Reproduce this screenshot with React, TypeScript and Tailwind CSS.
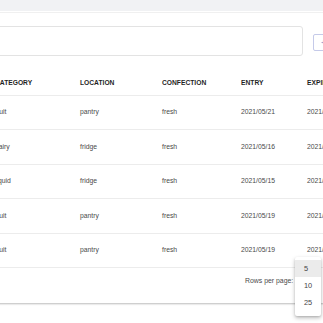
import React from "react";

const rows = [
  ["fruit", "pantry", "fresh", "2021/05/21", "2021/05/28"],
  ["dairy", "fridge", "fresh", "2021/05/16", "2021/05/23"],
  ["liquid", "fridge", "fresh", "2021/05/15", "2021/05/22"],
  ["fruit", "pantry", "fresh", "2021/05/19", "2021/05/26"],
  ["fruit", "pantry", "fresh", "2021/05/19", "2021/05/26"],
];

const heights = ["h-[34px]", "h-[35px]", "h-[34px]", "h-[35px]", "h-[34px]"];

export default function App() {
  return (
    <div
      className="relative w-[323px] h-[323px] overflow-hidden bg-white"
      style={{ fontFamily: '"Liberation Sans", Arial, sans-serif' }}
    >
      <div className="h-[11px] bg-[#f1f2f4]" />
      <div className="h-[1px] bg-white" />
      <div className="h-[1px] bg-[#f0f0f0]" />
      <div className="flex items-start mt-[13px]">
        <div className="ml-[-5px] w-[308px] h-[30px] border border-[#e3e3e3] rounded-[3px] bg-white shrink-0" />
        <div className="ml-[10px] mt-[8px] w-[30px] h-[17px] border border-[#c5cae9] rounded-[2px] shrink-0 flex items-center pl-[7px] text-[#5c6bc0] text-[8px] leading-none">
          +
        </div>
      </div>
      <div className="ml-[-5px] w-[360px]">
        <div className="mt-[15px] h-[25px] flex items-center border-b border-[#ececec] text-[6.7px] font-bold text-[#1f1f1f] leading-none">
          <div className="w-[85px] shrink-0">CATEGORY</div>
          <div className="w-[82px] shrink-0">LOCATION</div>
          <div className="w-[79px] shrink-0">CONFECTION</div>
          <div className="w-[66px] shrink-0">ENTRY</div>
          <div className="shrink-0">EXPIRY</div>
        </div>
        {rows.map((r, i) => (
          <div
            key={i}
            className={`${heights[i]} flex items-center border-b border-[#ececec] text-[6.8px] text-[#4a4a4a] leading-none`}
          >
            <div className="w-[85px] shrink-0">{r[0]}</div>
            <div className="w-[82px] shrink-0">{r[1]}</div>
            <div className="w-[79px] shrink-0">{r[2]}</div>
            <div className="w-[66px] shrink-0">{r[3]}</div>
            <div className="shrink-0">{r[4]}</div>
          </div>
        ))}
      </div>
      <div className="h-[36px] flex items-start pt-[9px] border-b border-[#cfcfcf] shadow-[0_1px_1px_rgba(0,0,0,0.08)]">
        <div className="ml-[245px] text-[6.9px] text-[#4a4a4a] leading-[8px]">Rows per page:</div>
      </div>
      <div className="absolute left-[295px] top-[257px] w-[26px] pt-[3px] pb-[5px] bg-white rounded-[2px] shadow-[0_2px_4px_rgba(0,0,0,0.25),0_1px_2px_rgba(0,0,0,0.12)] text-[7.4px] text-[#444] leading-none">
        <div className="h-[17px] flex items-center pl-[9px] bg-[#ebebeb]">5</div>
        <div className="h-[17px] flex items-center pl-[9px]">10</div>
        <div className="h-[17px] flex items-center pl-[9px]">25</div>
      </div>
    </div>
  );
}
